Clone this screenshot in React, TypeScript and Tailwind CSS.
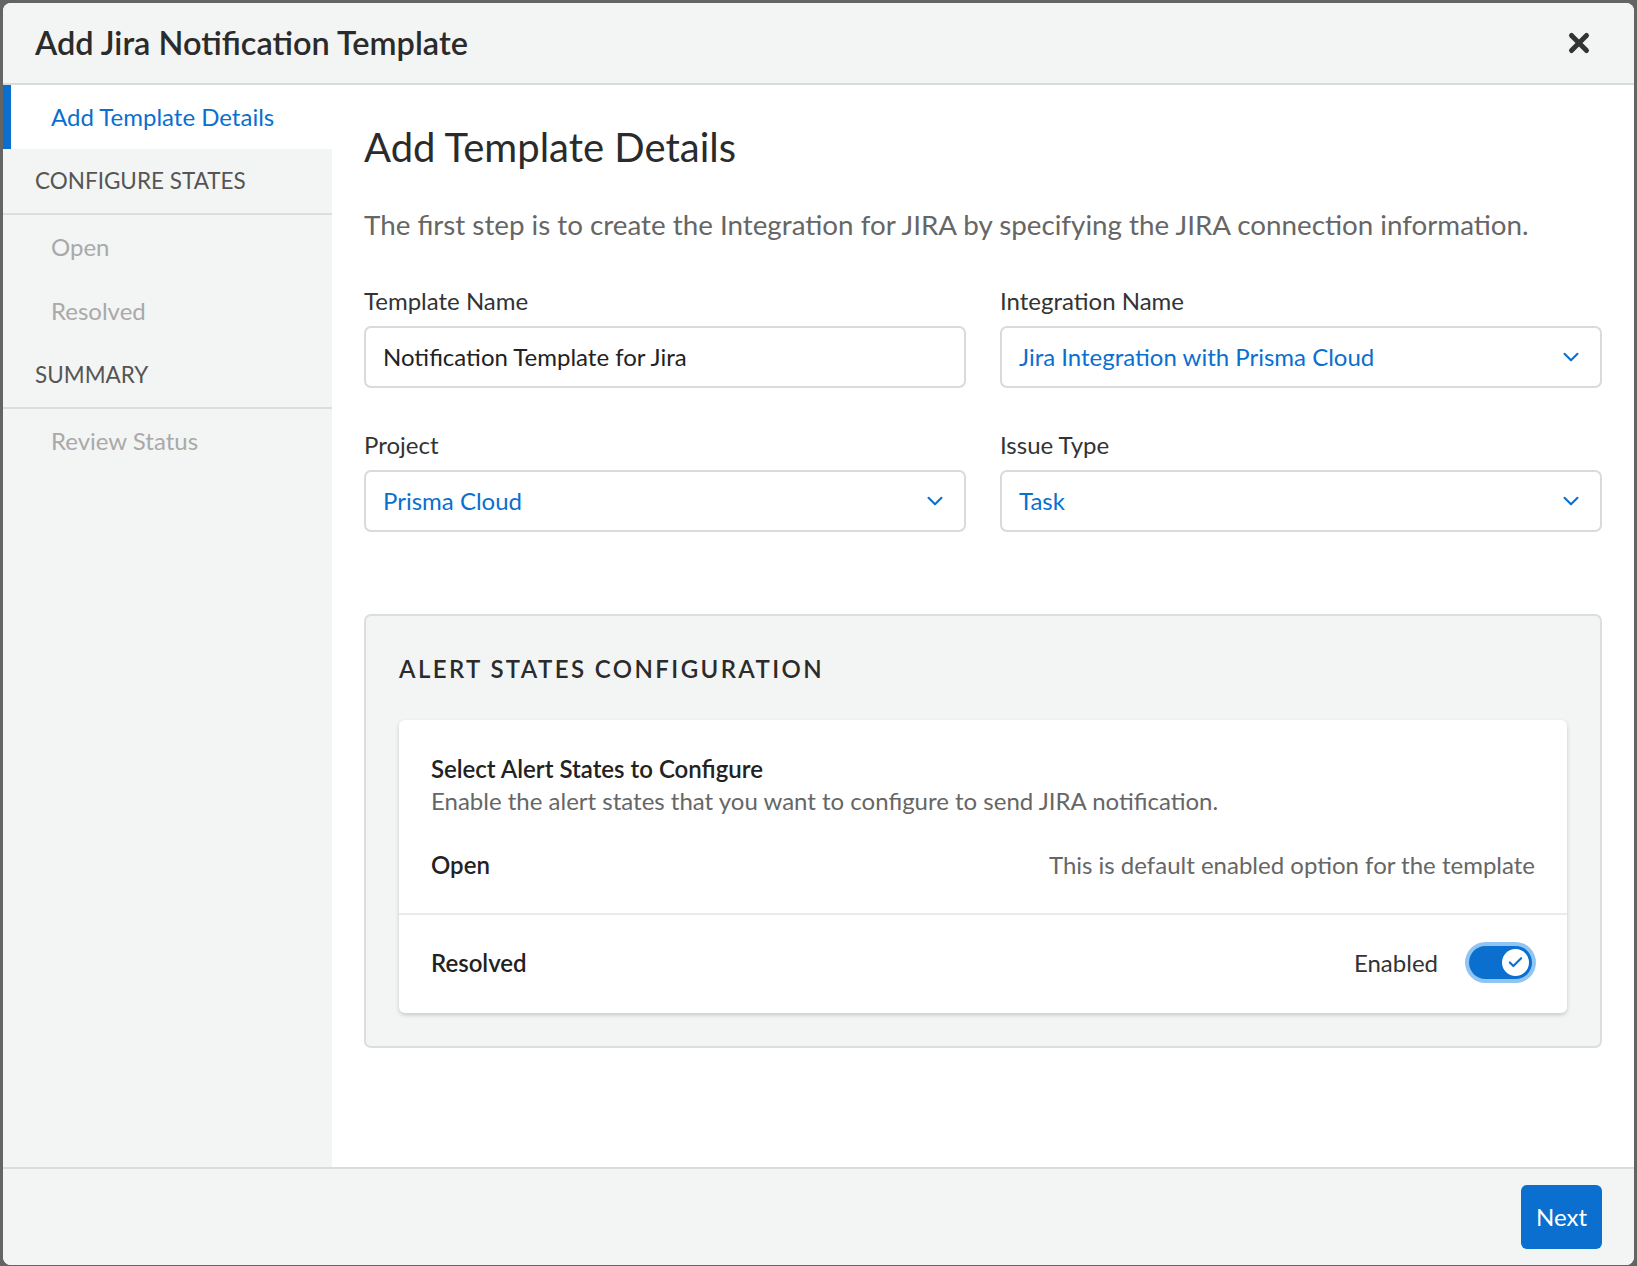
import { Check, ChevronDown, X } from "lucide-react";

const font = { fontFamily: "Lato, 'Open Sans', sans-serif" };

function Field({ label, value, select }: { label: string; value: string; select?: boolean }) {
  return (
    <div className="flex flex-col">
      <label className="mb-[10px] text-[24px] leading-[30px] text-[#333]">{label}</label>
      <div className="flex h-[62px] items-center justify-between rounded-[7px] border-2 border-[#dadada] bg-white pl-[17px] pr-[16px]">
        <span className={select ? "text-[24px] text-[#0a6fcf]" : "text-[24px] text-[#222]"}>{value}</span>
        {select && <ChevronDown className="h-[26px] w-[26px] text-[#0a6fcf]" strokeWidth={1.9} />}
      </div>
    </div>
  );
}

export default function App() {
  return (
    <div className="h-[1266px] w-full bg-[#646464] p-[3px]" style={font}>
      <div className="flex h-[1262px] w-[1631px] flex-col overflow-hidden rounded-[8px] bg-white">
        {/* header */}
        <div className="flex h-[82px] shrink-0 items-center justify-between border-b-2 border-[#d9dcdc] bg-[#f3f5f4] pl-[32px] pr-[40px]">
          <h1 className="text-[32.5px] font-semibold text-[#2b2b2b]">Add Jira Notification Template</h1>
          <X className="h-[30px] w-[30px] text-[#333]" strokeWidth={4} />
        </div>

        {/* body */}
        <div className="flex flex-1">
          <nav className="flex w-[329px] shrink-0 flex-col bg-[#f3f5f4]">
            <div className="flex h-[64px] items-center border-l-[8px] border-[#0a6fcf] bg-white pl-[40px] text-[24px] text-[#0a6fcf]">
              Add Template Details
            </div>
            <div className="flex h-[66px] items-center border-b-2 border-[#dcdede] pl-[32px] text-[22.5px] uppercase text-[#555]">
              Configure States
            </div>
            <div className="flex h-[64px] items-center pl-[48px] text-[24px] text-[#a9a9a9]">Open</div>
            <div className="flex h-[64px] items-center pl-[48px] text-[24px] text-[#a9a9a9]">Resolved</div>
            <div className="flex h-[66px] items-center border-b-2 border-[#dcdede] pl-[32px] text-[22.5px] uppercase text-[#555]">
              Summary
            </div>
            <div className="flex h-[64px] items-center pl-[48px] text-[24px] text-[#a9a9a9]">Review Status</div>
          </nav>

          <main className="flex-1 px-[32px] pt-[38px]">
            <h2 className="text-[40px] leading-[48px] text-[#2b2b2b]">Add Template Details</h2>
            <p className="mt-[36px] text-[27.75px] leading-[36px] text-[#666]">
              The first step is to create the Integration for JIRA by specifying the JIRA connection information.
            </p>

            <div className="mt-[43px] grid grid-cols-2 gap-x-[34px] gap-y-[42px]">
              <Field label="Template Name" value="Notification Template for Jira" />
              <Field label="Integration Name" value="Jira Integration with Prisma Cloud" select />
              <Field label="Project" value="Prisma Cloud" select />
              <Field label="Issue Type" value="Task" select />
            </div>

            <section className="mt-[82px] rounded-[7px] border-2 border-[#dcdede] bg-[#f3f5f4] px-[33px] pb-[33px] pt-[37px]">
              <h3 className="text-[24px] font-semibold uppercase leading-[32px] tracking-[2.4px] text-[#2b2b2b]">
                Alert States Configuration
              </h3>
              <div className="mt-[35px] rounded-[6px] bg-white shadow-[0_2px_4px_rgba(0,0,0,0.18)]">
                <div className="px-[32px] pt-[33px]">
                  <div className="text-[24px] font-semibold leading-[32px] text-[#222]">Select Alert States to Configure</div>
                  <div className="text-[24px] leading-[32px] text-[#666]">
                    Enable the alert states that you want to configure to send JIRA notification.
                  </div>
                  <div className="flex h-[96px] items-center justify-between">
                    <span className="text-[24px] font-semibold text-[#222]">Open</span>
                    <span className="text-[24px] text-[#666]">This is default enabled option for the template</span>
                  </div>
                </div>
                <div className="flex h-[100px] items-center justify-between border-t-2 border-[#ebebeb] pb-[3px] pl-[32px] pr-[31px]">
                  <span className="text-[24px] font-semibold text-[#222]">Resolved</span>
                  <div className="flex items-center gap-[27px]">
                    <span className="text-[24px] text-[#333]">Enabled</span>
                    <div className="flex h-[41px] w-[71px] items-center rounded-full bg-[#8fc4f3] p-[4px]">
                      <div className="flex h-full w-full items-center justify-end rounded-full bg-[#0a6fcf] pr-[3px]">
                        <div className="flex h-[27px] w-[27px] items-center justify-center rounded-full bg-white">
                          <Check className="h-[17px] w-[17px] text-[#0a6fcf]" strokeWidth={3} />
                        </div>
                      </div>
                    </div>
                  </div>
                </div>
              </div>
            </section>
          </main>
        </div>

        {/* footer */}
        <div className="flex h-[98px] shrink-0 items-center justify-end border-t-2 border-[#d9dcdc] bg-[#f3f5f4] pr-[32px]">
          <button className="h-[64px] rounded-[6px] bg-[#0a6fcf] px-[15px] text-[24px] text-white">Next</button>
        </div>
      </div>
    </div>
  );
}
